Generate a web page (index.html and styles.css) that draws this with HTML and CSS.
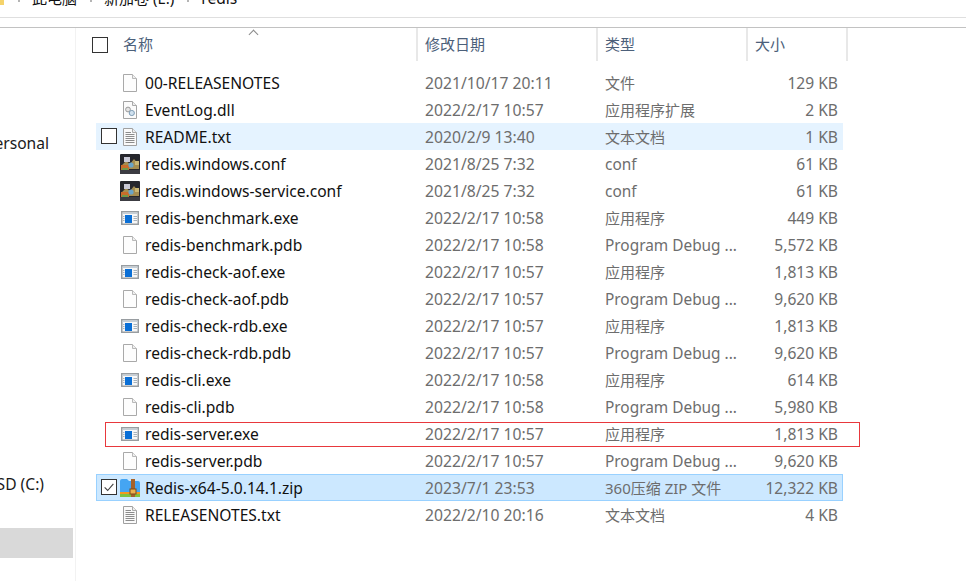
FILE: index.html
```html
<!DOCTYPE html>
<html lang="zh">
<head>
<meta charset="utf-8">
<title>redis</title>
<link rel="stylesheet" href="styles.css">
</head>
<body>
<svg class="defs" width="0" height="0" aria-hidden="true">
  <defs>
    <symbol id="doc" viewBox="0 0 16 18">
      <path d="M1.5.5H10.5L14.5 4.5V17.5H1.5Z" fill="#fdfdfd" stroke="#a9a9a9"/>
      <path d="M10.5.5V4.5H14.5" fill="#f0f0f0" stroke="#b9b9b9"/>
    </symbol>
    <symbol id="txt" viewBox="0 0 16 18">
      <path d="M1.5.5H10.5L14.5 4.5V17.5H1.5Z" fill="#fafafa" stroke="#a0a0a0"/>
      <path d="M10.5.5V4.5H14.5" fill="#eee" stroke="#aaa"/>
      <path d="M3.5 4.5H9M3.5 6.5H12.5M3.5 8.5H12.5M3.5 10.5H12.5M3.5 12.5H12.5M3.5 14.5H12.5" stroke="#8c8c8c"/>
    </symbol>
    <symbol id="dll" viewBox="0 0 16 18">
      <path d="M1.5.5H10.5L14.5 4.5V17.5H1.5Z" fill="#fbfbfb" stroke="#a4a4a4"/>
      <path d="M10.5.5V4.5H14.5" fill="#eee" stroke="#aaa"/>
      <circle cx="6" cy="8.5" r="2.4" fill="#e4e4e4" stroke="#9a9a9a"/>
      <circle cx="9.8" cy="12" r="2.6" fill="#cfe0ee" stroke="#7f9db5"/>
    </symbol>
    <symbol id="exe" viewBox="0 0 18 14">
      <rect x=".75" y=".75" width="16.5" height="12.5" fill="#f7f7f7" stroke="#989da1" stroke-width="1.5"/>
      <rect x="1.5" y="1.5" width="15" height="1.5" fill="#c5ced6"/>
      <rect x="4" y="4" width="7" height="8" fill="#0a6fd6"/>
      <path d="M12.5 5.5H16M12.5 7.5H16M12.5 9.5H16M2 5.5H3.5M2 7.5H3.5M2 9.5H3.5" stroke="#a9b3bc"/>
    </symbol>
    <symbol id="conf" viewBox="0 0 20 20">
      <rect width="20" height="20" rx="1" fill="#26262c"/>
      <rect y="16" width="20" height="4" fill="#3c3c42"/>
      <path d="M1 12L6 7L10 10L14 5L19 11V15H1Z" fill="#a58d50"/>
      <path d="M1 11H9V16H1Z" fill="#c96d2a"/>
      <path d="M4 3H10V8H4Z" fill="#c9c9d6"/>
      <circle cx="11" cy="11" r="2.6" fill="#6aa4c8"/>
      <path d="M15 7H19V11H15Z" fill="#c9b673"/>
      <path d="M2 14H8V16H2Z" fill="#6f9a4a"/>
    </symbol>
    <symbol id="zip" viewBox="0 0 20 18">
      <path d="M0 2Q0 0 2 0H7L9 2H18Q20 2 20 4V18H0Z" fill="#45a5f2"/>
      <path d="M0 13H20V18H0Z" fill="#7fc241"/>
      <path d="M0 13H20V15H0Z" fill="#f29a1f"/>
      <rect x="11" y="0" width="4" height="18" fill="#a5622a"/>
      <rect x="10" y="10" width="6" height="5" fill="#e9b04c" stroke="#7d4818"/>
    </symbol>
  </defs>
</svg>

<header class="crumbs">
  <span class="crumb-folder"></span>
  <span class="crumb c1">此电脑</span>
  <span class="crumb c2">新加卷 (E:)</span>
  <span class="crumb c3">redis</span>
</header>
<div class="strip"></div>

<div class="main">
  <nav class="nav">
    <div class="nav-item personal"><span>OneDrive - Personal</span></div>
    <div class="nav-item disk"><span>Local SSD (C:)</span></div>
    <div class="nav-item selected"></div>
  </nav>

  <section class="list">
    <div class="head">
      <div class="head-check"><span class="box"></span></div>
      <div class="hcol hname">名称<span class="caret"></span></div>
      <div class="hcol hdate">修改日期</div>
      <div class="hcol htype">类型</div>
      <div class="hcol hsize">大小</div>
    </div>
    <div class="rows">
      <div class="row"><div class="ic"><svg class="i-doc"><use href="#doc"/></svg></div><div class="name">00-RELEASENOTES</div><div class="date">2021/10/17 20:11</div><div class="type">文件</div><div class="size">129 KB</div></div>
      <div class="row"><div class="ic"><svg class="i-doc"><use href="#dll"/></svg></div><div class="name">EventLog.dll</div><div class="date">2022/2/17 10:57</div><div class="type">应用程序扩展</div><div class="size">2 KB</div></div>
      <div class="row hover"><div class="ic"><span class="box"></span><svg class="i-doc"><use href="#txt"/></svg></div><div class="name">README.txt</div><div class="date">2020/2/9 13:40</div><div class="type">文本文档</div><div class="size">1 KB</div></div>
      <div class="row"><div class="ic"><svg class="i-conf"><use href="#conf"/></svg></div><div class="name">redis.windows.conf</div><div class="date">2021/8/25 7:32</div><div class="type latin">conf</div><div class="size">61 KB</div></div>
      <div class="row"><div class="ic"><svg class="i-conf"><use href="#conf"/></svg></div><div class="name">redis.windows-service.conf</div><div class="date">2021/8/25 7:32</div><div class="type latin">conf</div><div class="size">61 KB</div></div>
      <div class="row"><div class="ic"><svg class="i-exe"><use href="#exe"/></svg></div><div class="name">redis-benchmark.exe</div><div class="date">2022/2/17 10:58</div><div class="type">应用程序</div><div class="size">449 KB</div></div>
      <div class="row"><div class="ic"><svg class="i-doc"><use href="#doc"/></svg></div><div class="name">redis-benchmark.pdb</div><div class="date">2022/2/17 10:58</div><div class="type latin">Program Debug ...</div><div class="size">5,572 KB</div></div>
      <div class="row"><div class="ic"><svg class="i-exe"><use href="#exe"/></svg></div><div class="name">redis-check-aof.exe</div><div class="date">2022/2/17 10:57</div><div class="type">应用程序</div><div class="size">1,813 KB</div></div>
      <div class="row"><div class="ic"><svg class="i-doc"><use href="#doc"/></svg></div><div class="name">redis-check-aof.pdb</div><div class="date">2022/2/17 10:57</div><div class="type latin">Program Debug ...</div><div class="size">9,620 KB</div></div>
      <div class="row"><div class="ic"><svg class="i-exe"><use href="#exe"/></svg></div><div class="name">redis-check-rdb.exe</div><div class="date">2022/2/17 10:57</div><div class="type">应用程序</div><div class="size">1,813 KB</div></div>
      <div class="row"><div class="ic"><svg class="i-doc"><use href="#doc"/></svg></div><div class="name">redis-check-rdb.pdb</div><div class="date">2022/2/17 10:57</div><div class="type latin">Program Debug ...</div><div class="size">9,620 KB</div></div>
      <div class="row"><div class="ic"><svg class="i-exe"><use href="#exe"/></svg></div><div class="name">redis-cli.exe</div><div class="date">2022/2/17 10:58</div><div class="type">应用程序</div><div class="size">614 KB</div></div>
      <div class="row"><div class="ic"><svg class="i-doc"><use href="#doc"/></svg></div><div class="name">redis-cli.pdb</div><div class="date">2022/2/17 10:58</div><div class="type latin">Program Debug ...</div><div class="size">5,980 KB</div></div>
      <div class="row marked"><div class="ic"><svg class="i-exe"><use href="#exe"/></svg></div><div class="name">redis-server.exe</div><div class="date">2022/2/17 10:57</div><div class="type">应用程序</div><div class="size">1,813 KB</div><span class="redbox"></span></div>
      <div class="row"><div class="ic"><svg class="i-doc"><use href="#doc"/></svg></div><div class="name">redis-server.pdb</div><div class="date">2022/2/17 10:57</div><div class="type latin">Program Debug ...</div><div class="size">9,620 KB</div></div>
      <div class="row sel"><div class="ic"><span class="box checked"><svg class="tick" viewBox="0 0 16 16"><path d="M3 8.5L6.5 12L13 4.5" fill="none" stroke="#444" stroke-width="1.3"/></svg></span><svg class="i-zip"><use href="#zip"/></svg></div><div class="name">Redis-x64-5.0.14.1.zip</div><div class="date">2023/7/1 23:53</div><div class="type">360压缩 ZIP 文件</div><div class="size">12,322 KB</div></div>
      <div class="row"><div class="ic"><svg class="i-doc"><use href="#txt"/></svg></div><div class="name">RELEASENOTES.txt</div><div class="date">2022/2/10 20:16</div><div class="type">文本文档</div><div class="size">4 KB</div></div>
    </div>
  </section>
</div>
</body>
</html>
```
FILE: styles.css
```css
* { box-sizing: border-box; }
html, body { margin: 0; height: 100%; }
body {
  width: 966px;
  height: 581px;
  overflow: hidden;
  background: #fff;
  color: #1a1a1a;
  font-family: "Noto Sans", "Noto Sans CJK SC", sans-serif;
  font-size: 15px;
  line-height: 20px;
}
.defs { position: absolute; }

.crumbs {
  display: flex;
  align-items: flex-end;
  height: 18px;
  border-bottom: 1px solid #dfdfdf;
  overflow: hidden;
  padding-bottom: 9px;
}
.crumb-folder { width: 4px; height: 6px; margin-bottom: 3px; background: #f5d36b; flex: none; }
.crumb { flex: none; white-space: nowrap; position: relative; color: #111; }
.crumb::before {
  content: "";
  position: absolute;
  top: 12px;
  left: -14px;
  width: 2px;
  height: 2px;
  background: #b5b5b5;
}
.c1 { margin-left: 28px; }
.c2 { margin-left: 27px; }
.c3 { margin-left: 27px; font-size: 15.6px; }
.strip { height: 10px; border-bottom: 1px solid #c2c2c2; }

.main { display: flex; height: 553px; }

.nav {
  flex: none;
  width: 76px;
  padding-right: 2px;
  border-right: 1px solid #f2f2f2;
  overflow: hidden;
  font-size: 15.6px;
}
.nav-item {
  height: 30px;
  display: flex;
  align-items: center;
  justify-content: flex-end;
  padding-right: 24px;
  white-space: nowrap;
}
.nav-item span { flex: none; }
.personal { margin-top: 100px; }
.disk { margin-top: 311px; padding-right: 29px; }
.selected { margin-top: 29px; background: #d9d9d9; }

.list { flex: 1; min-width: 0; }

.head {
  display: grid;
  grid-template-columns: 41px 301px 180px 150px 100px;
  height: 33px;
  color: #4c607a;
}
.head-check { display: flex; align-items: center; padding-left: 16px; }
.hcol {
  display: flex;
  align-items: center;
  padding: 0 0 1px 7px;
  border-right: 2px solid #e8e8e8;
  position: relative;
}
.hname { padding-left: 6px; }
.caret {
  position: absolute;
  left: 133px;
  top: 3px;
  width: 7px;
  height: 7px;
  border-left: 1px solid #8a8a8a;
  border-top: 1px solid #8a8a8a;
  transform: rotate(45deg);
}
.box {
  display: block;
  flex: none;
  width: 16px;
  height: 16px;
  border: 1px solid #333;
  background: #fff;
}
.tick { display: block; width: 14px; height: 14px; }

.rows { padding: 8px 0 0 20px; width: 767px; }

.row {
  display: grid;
  grid-template-columns: 49px 280px 180px 140px 1fr;
  align-items: center;
  height: 27px;
  position: relative;
  border: 1px solid transparent;
}
.row > div { margin-top: -1px; margin-bottom: -1px; }
.hover { background: #e5f3ff; border-color: #e5f3ff; }
.sel { background: #cce8ff; border-color: #99d1ff; }

.ic {
  display: flex;
  align-items: center;
  justify-content: flex-end;
  height: 27px;
  position: relative;
  padding-right: 7px;
}
.ic .box { position: absolute; left: 4px; top: 5px; }
.i-doc { width: 16px; height: 18px; margin-right: 1px; }
.i-exe { width: 18px; height: 14px; }
.i-conf { width: 20px; height: 20px; margin-right: -1px; }
.i-zip { width: 20px; height: 18px; margin-right: -1px; }

.name { color: #111; margin-left: -1px; white-space: nowrap; font-size: 15.6px; }
.date { color: #6d6d6d; white-space: nowrap; margin-left: -1px; font-size: 15.7px; }
.type { color: #6d6d6d; white-space: nowrap; margin-left: -1px; }
.row > .latin { font-size: 15.4px; padding-top: 2px; }
.size { color: #6d6d6d; text-align: right; padding-right: 4px; white-space: nowrap; font-size: 15.6px; }

.redbox {
  position: absolute;
  left: 8px;
  top: 1px;
  width: 755px;
  height: 25px;
  border: 1px solid #e8383d;
  pointer-events: none;
}
```
